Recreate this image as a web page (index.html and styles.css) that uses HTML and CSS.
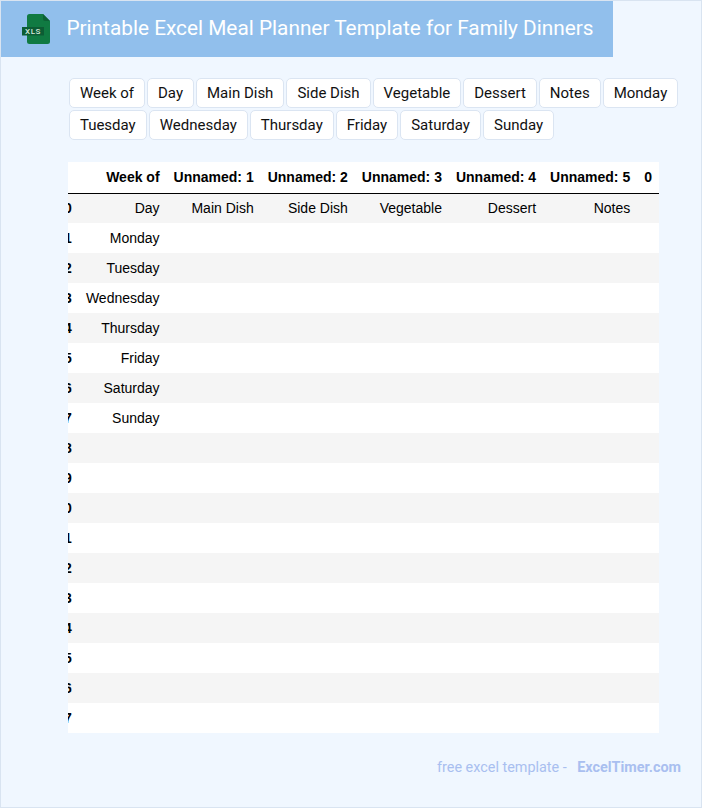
FILE: index.html
```html
<!DOCTYPE html>
<html lang="en">
<head>
<meta charset="utf-8">
<title>Printable Excel Meal Planner Template for Family Dinners</title>
<link rel="stylesheet" href="styles.css">
</head>
<body>
<div class="page">
  <header class="banner">
    <svg class="file-icon" width="30" height="32" viewBox="0 0 30 32" aria-hidden="true">
      <path d="M7.500 1H21L28 8V28.500a2.500 2.500 0 0 1-2.500 2.500H7.500A2.500 2.500 0 0 1 5 28.500V3.500A2.500 2.500 0 0 1 7.500 1Z" fill="#107a42"/>
      <path d="M21 1V6a2 2 0 0 0 2 2H28Z" fill="#0c6136"/>
      <rect x="0" y="14" width="22" height="8.500" fill="#0c5c34"/>
      <text x="11" y="21" class="file-label" text-anchor="middle">XLS</text>
    </svg>
    <h1 class="title">Printable Excel Meal Planner Template for Family Dinners</h1>
  </header>
  <div class="tags">
    <span class="tag">Week of</span><span class="tag">Day</span><span class="tag">Main Dish</span><span class="tag">Side Dish</span><span class="tag">Vegetable</span><span class="tag">Dessert</span><span class="tag">Notes</span><span class="tag">Monday</span><span class="tag">Tuesday</span><span class="tag">Wednesday</span><span class="tag">Thursday</span><span class="tag">Friday</span><span class="tag">Saturday</span><span class="tag">Sunday</span>
  </div>
  <div class="table-clip">
    <table class="sheet">
      <thead>
        <tr><th></th><th>Week of</th><th>Unnamed: 1</th><th>Unnamed: 2</th><th>Unnamed: 3</th><th>Unnamed: 4</th><th>Unnamed: 5</th><th>0</th></tr>
      </thead>
      <tbody>
        <tr><th>0</th><td>Day</td><td>Main Dish</td><td>Side Dish</td><td>Vegetable</td><td>Dessert</td><td>Notes</td><td></td></tr>
        <tr><th>1</th><td>Monday</td><td></td><td></td><td></td><td></td><td></td><td></td></tr>
        <tr><th>2</th><td>Tuesday</td><td></td><td></td><td></td><td></td><td></td><td></td></tr>
        <tr><th>3</th><td>Wednesday</td><td></td><td></td><td></td><td></td><td></td><td></td></tr>
        <tr><th>4</th><td>Thursday</td><td></td><td></td><td></td><td></td><td></td><td></td></tr>
        <tr><th>5</th><td>Friday</td><td></td><td></td><td></td><td></td><td></td><td></td></tr>
        <tr><th>6</th><td>Saturday</td><td></td><td></td><td></td><td></td><td></td><td></td></tr>
        <tr><th>7</th><td>Sunday</td><td></td><td></td><td></td><td></td><td></td><td></td></tr>
        <tr><th>8</th><td></td><td></td><td></td><td></td><td></td><td></td><td></td></tr>
        <tr><th>9</th><td></td><td></td><td></td><td></td><td></td><td></td><td></td></tr>
        <tr><th>10</th><td></td><td></td><td></td><td></td><td></td><td></td><td></td></tr>
        <tr><th>11</th><td></td><td></td><td></td><td></td><td></td><td></td><td></td></tr>
        <tr><th>12</th><td></td><td></td><td></td><td></td><td></td><td></td><td></td></tr>
        <tr><th>13</th><td></td><td></td><td></td><td></td><td></td><td></td><td></td></tr>
        <tr><th>14</th><td></td><td></td><td></td><td></td><td></td><td></td><td></td></tr>
        <tr><th>15</th><td></td><td></td><td></td><td></td><td></td><td></td><td></td></tr>
        <tr><th>16</th><td></td><td></td><td></td><td></td><td></td><td></td><td></td></tr>
        <tr><th>17</th><td></td><td></td><td></td><td></td><td></td><td></td><td></td></tr>
      </tbody>
    </table>
  </div>
  <footer class="foot">
    <span class="foot-text">free excel template -</span><span class="foot-brand">ExcelTimer.com</span>
  </footer>
</div>
</body>
</html>
```
FILE: styles.css
```css
html, body {
  margin: 0;
  padding: 0;
}
body {
  background: #f0f7ff;
  font-family: Roboto, sans-serif;
}
.page {
  box-sizing: border-box;
  width: 702px;
  height: 808px;
  background: #f0f7ff;
  border: 1px solid #d9e4f1;
  overflow: hidden;
}
.banner {
  display: flex;
  align-items: center;
  width: 612px;
  height: 56px;
  background: #91bfec;
}
.file-icon {
  flex: none;
  margin-left: 21px;
}
.file-label {
  font-family: Roboto, sans-serif;
  font-size: 8px;
  font-weight: 500;
  letter-spacing: 0.6px;
  fill: #d5e8dc;
}
.title {
  margin: 0 0 2px 14.400px;
  font-size: 20.8px;
  font-weight: 400;
  line-height: 24px;
  color: #fff;
  white-space: nowrap;
}
.tags {
  display: flex;
  flex-wrap: wrap;
  gap: 2px;
  width: 620px;
  margin: 21px 0 0 67.900px;
}
.tag {
  box-sizing: border-box;
  height: 30px;
  padding: 0 10px;
  background: #fff;
  border: 1px solid #dbe5f2;
  border-radius: 5px;
  font-size: 15px;
  line-height: 28px;
  color: #111;
  white-space: nowrap;
}
.table-clip {
  width: 591px;
  margin: 22px 0 0 67px;
  overflow: hidden;
}
.sheet {
  margin-left: -18.700px;
  border-collapse: collapse;
  font-family: "Liberation Sans", Arial, sans-serif;
  font-size: 14px;
  color: #000;
  background: #fff;
}
.sheet th,
.sheet td {
  box-sizing: border-box;
  height: 30px;
  padding: 0 7px;
  text-align: right;
  white-space: nowrap;
}
.sheet thead th {
  height: 31px;
  padding-bottom: 1px;
}
.sheet thead tr {
  border-bottom: 1px solid #000;
}
.sheet tbody tr:nth-child(odd) {
  background: #f5f5f5;
}
.foot {
  display: flex;
  justify-content: flex-end;
  align-items: center;
  margin: 22px 20px 0 0;
  height: 24px;
  font-size: 14.4px;
  color: #a9bff0;
}
.foot-brand {
  margin-left: 10.500px;
  font-weight: 700;
}
```
